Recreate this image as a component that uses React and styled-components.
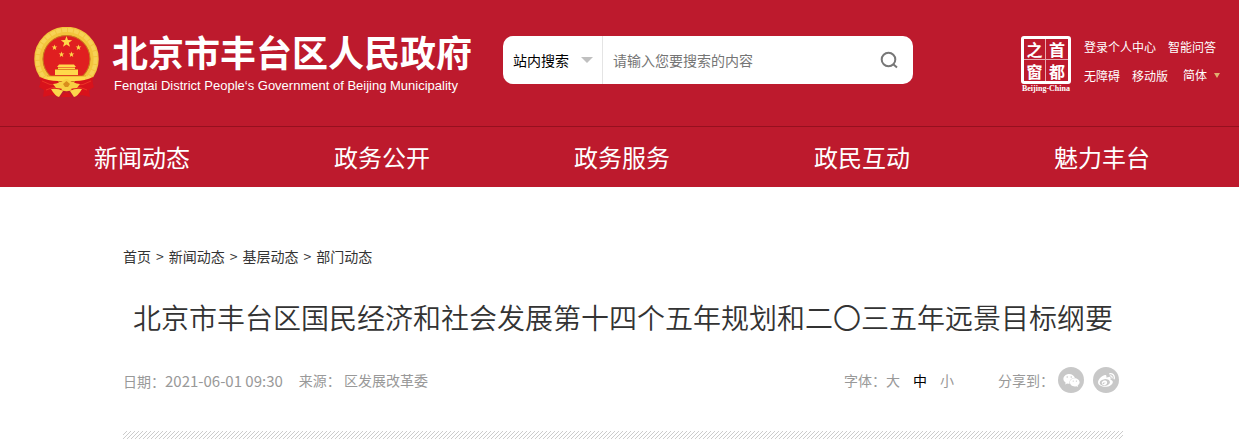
import React from 'react';
import styled, { createGlobalStyle } from 'styled-components';
import { FaWeibo, FaWeixin } from 'react-icons/fa';

const GlobalStyle = createGlobalStyle`
  * {
    box-sizing: border-box;
  }

  body {
    margin: 0;
    background: #fff;
    color: #333;
    font-family: "Noto Sans CJK SC", "Liberation Sans", sans-serif;
    font-size: 14px;
  }

  a {
    color: inherit;
    text-decoration: none;
  }

  button, input, select {
    font-family: inherit;
    font-size: inherit;
    border: none;
    outline: none;
    padding: 0;
    background: none;
  }
`

const Header = styled.header`
  background: #bd1a2d;
  color: #fff;
`

const TopBar = styled.div`
  display: flex;
  align-items: flex-start;
  height: 126px;
  padding: 27px 18px 0 33px;
`

const Brand = styled.a`
  display: flex;
  flex: none;
  gap: 12px;
`

const BrandText = styled.div`
  width: 363px;
  white-space: nowrap;
`

const SiteName = styled.div`
  font-size: 36px;
  font-weight: 700;
  line-height: 48px;
`

const SiteNameEn = styled.div`
  padding: 2px 0 0 2px;
  font-family: "Liberation Sans", Arial, sans-serif;
  font-size: 13px;
  line-height: 18px;
`

const SearchForm = styled.form`
  display: flex;
  align-items: center;
  flex: 0 1 410px;
  height: 48px;
  margin: 9px auto 0 28px;
  border-radius: 10px;
  background: #fff;
`

const ScopeBox = styled.div`
  display: flex;
  align-items: center;
  flex: none;
  width: 100px;
  height: 48px;
  padding: 0 9px 0 10px;
  border-right: 1px solid #e4e4e4;
`

const PlainSelect = styled.select`
  appearance: none;
  flex: 1;
  min-width: 0;
  color: ${props => props.$color};
  line-height: 20px;
  cursor: pointer;
`

const Triangle = styled.span`
  flex: none;
  border-left: ${props => props.$size}px solid transparent;
  border-right: ${props => props.$size}px solid transparent;
  border-top: ${props => props.$height}px solid ${props => props.$color};
`

const SearchInput = styled.input`
  flex: 1;
  min-width: 0;
  height: 48px;
  padding: 0 10px;

  &::placeholder {
    color: #757575;
    opacity: 1;
  }
`

const SearchButton = styled.button`
  display: flex;
  padding: 0 15px;
  cursor: pointer;
`

const Tools = styled.div`
  display: flex;
  flex: none;
  gap: 11px;
  padding-top: 9px;
`

const Seal = styled.a`
  display: flex;
  flex-direction: column;
  align-items: center;
  width: 54px;
`

const SealFrame = styled.span`
  display: grid;
  grid-template-columns: 1fr 1fr;
  width: 50px;
  height: 48px;
  border: 3px solid #fff;
  border-radius: 3px;
`

const SealChar = styled.span`
  display: flex;
  align-items: center;
  justify-content: center;
  height: 21px;
  font-size: 16px;
  font-weight: 700;
  line-height: 16px;
  border-right: ${props => (props.$left ? '1px solid #e9a9b0' : 'none')};
  border-bottom: ${props => (props.$top ? '1px solid #e9a9b0' : 'none')};
`

const SealCaption = styled.span`
  font-family: "Liberation Serif", serif;
  font-size: 8px;
  font-weight: 700;
  line-height: 9px;
  white-space: nowrap;
`

const Links = styled.div`
  font-size: 12px;
  width: 137px;
`

const LinkRow = styled.div`
  display: flex;
  align-items: center;
  gap: 12px;
  height: 20px;
  margin-bottom: 9px;
  white-space: nowrap;
`

const Language = styled.div`
  display: flex;
  align-items: center;
  width: 37px;
  margin-left: 3px;
`

const Nav = styled.nav`
  display: grid;
  grid-template-columns: repeat(5, 1fr);
  padding: 0 17px 0 22px;
  border-top: 1px solid #96101f;
`

const NavItem = styled.a`
  height: 60px;
  font-size: 24px;
  line-height: 60px;
  text-align: center;
`

const Main = styled.main`
  padding: 59px 116px 0 123px;
`

const Breadcrumb = styled.nav`
  display: flex;
  gap: 5px;
  line-height: 20px;
`

const Title = styled.h1`
  margin: 31px 0 0;
  font-size: 28px;
  font-weight: 350;
  line-height: 40px;
  text-align: center;
`

const Meta = styled.div`
  display: flex;
  align-items: center;
  height: 28px;
  margin-top: 29px;
  color: #999;
`

const Published = styled.span`
  margin-right: 16px;
`

const Time = styled.time`
  font-size: 15px;
`

const Source = styled.span`
  margin-right: auto;
`

const FontSizes = styled.div`
  display: flex;
  margin-right: 44px;
`

const SizeButton = styled.button`
  margin-right: 13px;
  color: ${props => (props.$active ? '#000' : '#999')};
  cursor: pointer;

  &:last-child {
    margin-right: 0;
  }
`

const Share = styled.div`
  display: flex;
  align-items: center;
  margin-right: 4px;
`

const ShareButton = styled.button`
  display: flex;
  align-items: center;
  justify-content: center;
  width: 26px;
  height: 26px;
  margin-left: ${props => props.$gap}px;
  border-radius: 50%;
  background: #c8c8c8;
  color: #fff;
  cursor: pointer;
`

const Stripes = styled.div`
  height: 8px;
  margin-top: 37px;
  background: linear-gradient(135deg, transparent 38%, #ccc 39% 61%, transparent 62%) 0 0 / 4px 4px;
`

const navItems = ['新闻动态', '政务公开', '政务服务', '政民互动', '魅力丰台'];
const crumbs = ['首页', '新闻动态', '基层动态', '部门动态'];
const sizes = ['大', '中', '小'];

const star = (cx, cy, r) => {
    const points = [];
    for (let i = 0; i < 10; i++) {
        const radius = i % 2 ? r * 0.4 : r;
        const angle = -Math.PI / 2 + (i * Math.PI) / 5;
        points.push(`${(cx + radius * Math.cos(angle)).toFixed(2)},${(cy + radius * Math.sin(angle)).toFixed(2)}`);
    }
    return points.join(' ');
}

const Emblem = () => (
    <svg width="67" height="72" viewBox="0 0 67 72" aria-hidden="true">
        <circle cx="33.5" cy="32" r="26" fill="#e01f20" />
        <circle cx="33.5" cy="32" r="28" fill="none" stroke="#f3c43c" strokeWidth="8.5" />
        <circle cx="33.5" cy="32" r="29" fill="none" stroke="#fbdf70" strokeWidth="4" strokeDasharray="5 1" opacity="0.5" />
        <circle cx="33.5" cy="32" r="23.5" fill="none" stroke="#c8811d" strokeWidth="1" />
        <g fill="#ffd84a">
            <polygon points={star(33.5, 15, 6)} />
            <polygon points={star(21.5, 20.5, 3)} />
            <polygon points={star(45.5, 20.5, 3)} />
            <polygon points={star(28.5, 27.5, 3)} />
            <polygon points={star(38.5, 27.5, 3)} />
            <path d="M26 37.5H41L43 40H24Z" />
            <path d="M25 40.5H42V42H25Z" />
            <path d="M22 42.5H45V48H22Z" />
            <path d="M13 49H54L51 54H16Z" />
        </g>
        <path d="M22 42.5H45M14 49H53" stroke="#d98d1c" strokeWidth="0.7" />
        <path d="M7 50Q15 54 25 54L29 62Q24 70 18 68L10 70L11 63L6 60Q8 56 7 50Z" fill="#d8121b" />
        <path d="M60 50Q52 54 42 54L38 62Q43 70 49 68L57 70L56 63L61 60Q59 56 60 50Z" fill="#d8121b" />
        <path d="M9 54Q17 59 25 58M58 54Q50 59 42 58M13 63Q20 59 26 61M54 63Q47 59 41 61" fill="none" stroke="#ec3426" strokeWidth="1" />
        <path d="M20 57Q27 56 31 53Q33.5 51 36 53Q40 56 47 57L44 61Q38 61 33.5 64Q29 61 23 61Z" fill="#f8cf43" />
        <path d="M30 57L33.5 54L37 57L35 60H32Z" fill="#d98d1c" />
        <path d="M18 62Q25 61 30 64L26 70Q22 69 18 62ZM49 62Q42 61 37 64L41 70Q45 69 49 62Z" fill="#fbd64c" />
        <path d="M28 70Q33.5 61 39 70Z" fill="#d8121b" />
    </svg>
)

const SearchIcon = () => (
    <svg width="18" height="20" viewBox="0 0 18 20" fill="none" stroke="#777" strokeWidth="2" aria-hidden="true">
        <circle cx="8.5" cy="9.5" r="6.8" />
        <path d="M13 14L17 17.5" />
    </svg>
)

const App = () => (
    <>
        <GlobalStyle />
        <Header>
            <TopBar>
                <Brand href="#">
                    <Emblem />
                    <BrandText>
                        <SiteName>北京市丰台区人民政府</SiteName>
                        <SiteNameEn>Fengtai District People‘s Government of Beijing Municipality</SiteNameEn>
                    </BrandText>
                </Brand>
                <SearchForm onSubmit={e => e.preventDefault()}>
                    <ScopeBox>
                        <PlainSelect $color="#000" aria-label="搜索范围">
                            <option>站内搜索</option>
                        </PlainSelect>
                        <Triangle $size={6} $height={6} $color="#c0c0c0" />
                    </ScopeBox>
                    <SearchInput type="text" aria-label="搜索" placeholder="请输入您要搜索的内容" />
                    <SearchButton type="submit" aria-label="搜索"><SearchIcon /></SearchButton>
                </SearchForm>
                <Tools>
                    <Seal href="#">
                        <SealFrame>
                            <SealChar $left $top>之</SealChar>
                            <SealChar $top>首</SealChar>
                            <SealChar $left>窗</SealChar>
                            <SealChar>都</SealChar>
                        </SealFrame>
                        <SealCaption>Beijing-China</SealCaption>
                    </Seal>
                    <Links>
                        <LinkRow>
                            <a href="#">登录个人中心</a>
                            <a href="#">智能问答</a>
                        </LinkRow>
                        <LinkRow>
                            <a href="#">无障碍</a>
                            <a href="#">移动版</a>
                            <Language>
                                <PlainSelect $color="#fff" aria-label="语言">
                                    <option>简体</option>
                                </PlainSelect>
                                <Triangle $size={3} $height={5} $color="#e0b070" />
                            </Language>
                        </LinkRow>
                    </Links>
                </Tools>
            </TopBar>
            <Nav>
                {navItems.map(item => <NavItem key={item} href="#">{item}</NavItem>)}
            </Nav>
        </Header>
        <Main>
            <Breadcrumb>
                {crumbs.map((crumb, i) => (
                    <React.Fragment key={crumb}>
                        {i > 0 && <span>&gt;</span>}
                        <a href="#">{crumb}</a>
                    </React.Fragment>
                ))}
            </Breadcrumb>
            <Title>北京市丰台区国民经济和社会发展第十四个五年规划和二〇三五年远景目标纲要</Title>
            <Meta>
                <Published>日期：<Time>2021-06-01 09:30</Time></Published>
                <Source>来源： 区发展改革委</Source>
                <FontSizes>
                    <span>字体：</span>
                    {sizes.map(size => (
                        <SizeButton key={size} type="button" $active={size === '中'}>{size}</SizeButton>
                    ))}
                </FontSizes>
                <Share>
                    <span>分享到：</span>
                    <ShareButton type="button" aria-label="微信" $gap={4}><FaWeixin size={17} /></ShareButton>
                    <ShareButton type="button" aria-label="微博" $gap={9}><FaWeibo size={17} /></ShareButton>
                </Share>
            </Meta>
            <Stripes />
        </Main>
    </>
)

export default App;
